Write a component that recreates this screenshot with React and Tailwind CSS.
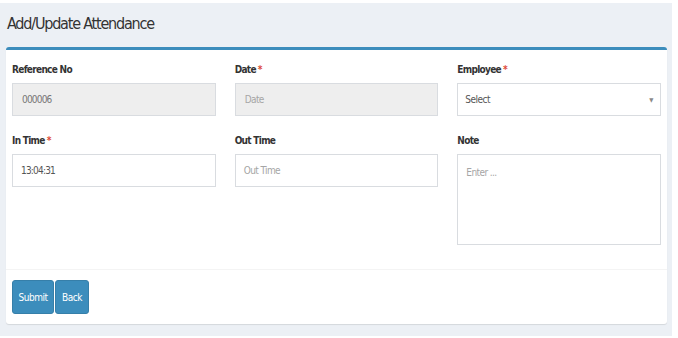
export default function App() {
  const font = {
    fontFamily: '"DejaVu Sans Condensed", "Liberation Sans", sans-serif',
  };

  return (
    <div className="w-[678px] h-[338px] bg-white pt-[3px] pr-[6px] pb-[2px] overflow-hidden font-stretch-condensed" style={font}>
      <div className="h-full bg-[#ecf0f5] pl-[6px] pr-[5px]">
        {/* Header */}
        <div className="h-[44px] pl-[1px] flex items-center">
          <h1 className="text-[16px] leading-none tracking-[-1.2px] text-[#333] pb-[2px]">Add/Update Attendance</h1>
        </div>

        {/* Card */}
        <div className="bg-white border-t-[3px] border-[#3c8dbc] rounded-[3px] shadow-[0_1px_1px_rgba(0,0,0,0.1)]">
          <div className="px-[6px] pt-[12px] pb-[24px] grid grid-cols-3 gap-x-[19px] gap-y-[17px]">
            <Field label="Reference No">
              <div className="h-[33px] border border-[#d9dce0] bg-[#eeeeee] px-[9px] flex items-center text-[10px] tracking-[-0.8px] text-[#777]">
                000006
              </div>
            </Field>
            <Field label="Date" required>
              <div className="h-[33px] border border-[#d9dce0] bg-[#eeeeee] px-[9px] flex items-center text-[10px] tracking-[-0.6px] text-[#a5a5a5]">
                Date
              </div>
            </Field>
            <Field label="Employee" required>
              <div className="h-[33px] border border-[#d9dce0] bg-white pl-[7px] pr-[7px] flex items-center justify-between text-[10px] tracking-[-0.5px] text-[#555]">
                <span>Select</span>
                <span className="text-[6px] text-[#888]">▼</span>
              </div>
            </Field>
            <Field label="In Time" required>
              <div className="h-[33px] border border-[#d9dce0] bg-white px-[8px] flex items-center text-[10px] tracking-[-0.8px] text-[#555]">
                13:04:31
              </div>
            </Field>
            <Field label="Out Time">
              <div className="h-[33px] border border-[#d9dce0] bg-white px-[8px] flex items-center text-[10px] tracking-[-0.6px] text-[#a5a5a5]">
                Out Time
              </div>
            </Field>
            <Field label="Note">
              <div className="h-[91px] border border-[#d9dce0] bg-white px-[8px] pt-[11px] text-[10px] leading-[14px] tracking-[-0.6px] text-[#a5a5a5]">
                Enter ...
              </div>
            </Field>
          </div>

          {/* Footer */}
          <div className="border-t border-[#f4f4f4] px-[6px] pt-[10px] pb-[10px] flex gap-[1px]">
            <button className="h-[34px] w-[42px] rounded-[3px] bg-[#3c8dbc] border border-[#367fa9] text-white text-[10px] tracking-[-0.5px]">
              Submit
            </button>
            <button className="h-[34px] w-[34px] rounded-[3px] bg-[#3c8dbc] border border-[#367fa9] text-white text-[10px] tracking-[-0.5px]">
              Back
            </button>
          </div>
        </div>
      </div>
    </div>
  );
}

function Field({ label, required, children }) {
  return (
    <div>
      <div className="h-[16px] leading-[16px] mb-[5px] text-[10px] tracking-[-0.7px] font-bold text-[#333]">
        {label}
        {required && <span className="text-[#dd4b39] ml-[2px]">*</span>}
      </div>
      {children}
    </div>
  );
}
